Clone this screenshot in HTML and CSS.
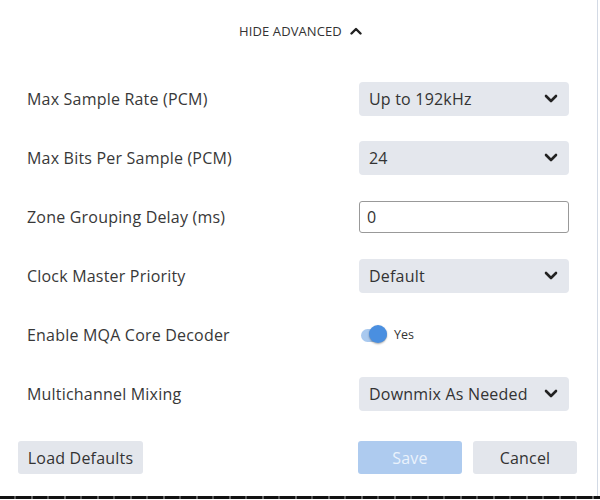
FILE: index.html
```html
<!DOCTYPE html>
<html>
<head>
<meta charset="utf-8">
<link rel="stylesheet" href="styles.css">
</head>
<body>
<div class="panel">
  <div class="header">
    <span class="hide">HIDE ADVANCED</span>
    <svg class="up" width="12" height="8" viewBox="0 0 12 8"><path d="M1.5 6.5 L6 2 L10.5 6.5" fill="none" stroke="#222" stroke-width="2.4" stroke-linecap="round" stroke-linejoin="round"/></svg>
  </div>
  <div class="rows">
    <div class="row">
      <div class="label">Max Sample Rate (PCM)</div>
      <div class="select"><span>Up to 192kHz</span><svg class="chev" width="14" height="9" viewBox="0 0 14 9"><path d="M2 2 L7 7 L12 2" fill="none" stroke="#222" stroke-width="2.6" stroke-linecap="round" stroke-linejoin="round"/></svg></div>
    </div>
    <div class="row">
      <div class="label">Max Bits Per Sample (PCM)</div>
      <div class="select"><span>24</span><svg class="chev" width="14" height="9" viewBox="0 0 14 9"><path d="M2 2 L7 7 L12 2" fill="none" stroke="#222" stroke-width="2.6" stroke-linecap="round" stroke-linejoin="round"/></svg></div>
    </div>
    <div class="row">
      <div class="label">Zone Grouping Delay (ms)</div>
      <div class="input">0</div>
    </div>
    <div class="row">
      <div class="label">Clock Master Priority</div>
      <div class="select"><span>Default</span><svg class="chev" width="14" height="9" viewBox="0 0 14 9"><path d="M2 2 L7 7 L12 2" fill="none" stroke="#222" stroke-width="2.6" stroke-linecap="round" stroke-linejoin="round"/></svg></div>
    </div>
    <div class="row">
      <div class="label">Enable MQA Core Decoder</div>
      <div class="toggle-wrap">
        <div class="toggle"><div class="track"></div><div class="knob"></div></div>
        <span class="yes">Yes</span>
      </div>
    </div>
    <div class="row">
      <div class="label">Multichannel Mixing</div>
      <div class="select"><span>Downmix As Needed</span><svg class="chev" width="14" height="9" viewBox="0 0 14 9"><path d="M2 2 L7 7 L12 2" fill="none" stroke="#222" stroke-width="2.6" stroke-linecap="round" stroke-linejoin="round"/></svg></div>
    </div>
  </div>
  <div class="footer">
    <div class="btn load">Load Defaults</div>
    <div class="right-btns">
      <div class="btn save">Save</div>
      <div class="btn cancel">Cancel</div>
    </div>
  </div>
</div>
<div class="bottom-line"></div>
</body>
</html>
```
FILE: styles.css
```css
html, body {
  margin: 0;
  padding: 0;
  background: #fff;
}
body {
  font-family: "Open Sans", "Noto Sans", sans-serif;
  color: #333;
  width: 600px;
  height: 500px;
  overflow: hidden;
}
.panel {
  width: 598px;
  height: 496px;
  border-right: 1px solid #d3dae5;
  box-sizing: border-box;
}
.header {
  height: 62px;
  display: flex;
  align-items: center;
  justify-content: center;
  gap: 8px;
  padding-left: 4px;
}
.hide {
  font-size: 13px;
  color: #333;
  letter-spacing: 0.1px;
}
.up {
  display: block;
}
.rows {
  padding-top: 7px;
}
.row {
  height: 59px;
  display: flex;
  align-items: center;
  justify-content: space-between;
  padding-left: 27px;
  padding-right: 28px;
  font-size: 16px;
  letter-spacing: 0.2px;
}
.label {
  color: #383838;
}
.select {
  width: 210px;
  height: 34px;
  background: #e4e7ed;
  border-radius: 4px;
  box-sizing: border-box;
  padding: 0 11px 0 10px;
  display: flex;
  align-items: center;
  justify-content: space-between;
  color: #333;
}
.chev {
  display: block;
}
.input {
  width: 210px;
  height: 32px;
  border: 1px solid #999;
  border-radius: 3px;
  box-sizing: border-box;
  padding: 0 7px;
  display: flex;
  align-items: center;
  color: #333;
  background: #fff;
}
.toggle-wrap {
  width: 210px;
  display: flex;
  align-items: center;
  gap: 5px;
}
.toggle {
  position: relative;
  width: 28px;
  height: 20px;
  margin-left: 2px;
}
.track {
  position: absolute;
  left: 0;
  top: 4px;
  width: 26px;
  height: 13px;
  border-radius: 7px;
  background: #a9c9ef;
}
.knob {
  position: absolute;
  left: 8px;
  top: 0;
  width: 18px;
  height: 18px;
  border-radius: 50%;
  background: #4a8fe0;
  box-shadow: 0 1px 2px rgba(0,0,0,0.35);
}
.yes {
  font-size: 12.5px;
  letter-spacing: 0;
  color: #333;
}
.footer {
  display: flex;
  justify-content: space-between;
  padding: 18px 20px 0 18px;
}
.right-btns {
  display: flex;
  gap: 11px;
}
.btn {
  height: 33px;
  border-radius: 3px;
  background: #e3e6ec;
  display: flex;
  align-items: center;
  justify-content: center;
  font-size: 16px;
  letter-spacing: 0.2px;
  color: #333;
  box-sizing: border-box;
}
.load {
  width: 125px;
}
.save {
  width: 104px;
  background: #aecbef;
  color: #eaf2fc;
}
.cancel {
  width: 104px;
}
.bottom-line {
  height: 3px;
  background: repeating-linear-gradient(90deg, #111 0 14px, #555 14px 16px, #111 16px 31px, #666 31px 33px);
}
```
